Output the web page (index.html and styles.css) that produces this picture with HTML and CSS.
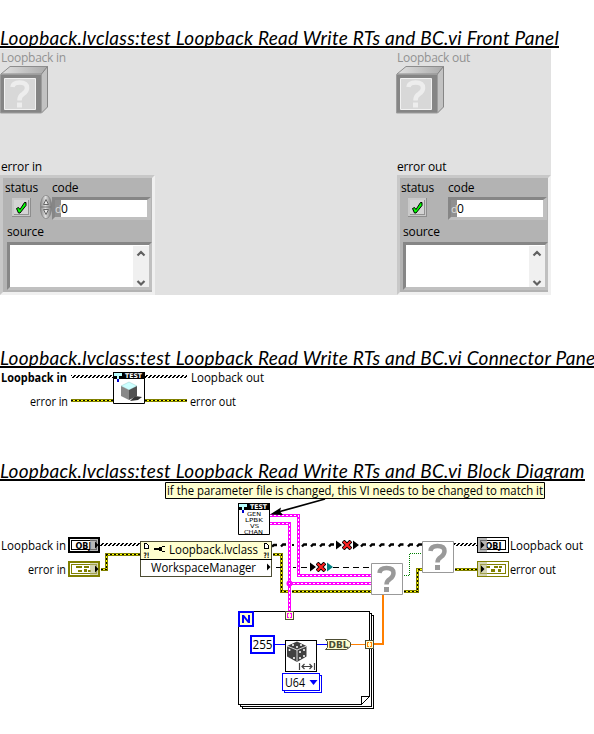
FILE: index.html
```html
<!DOCTYPE html>
<html lang="en">
<head>
<meta charset="utf-8">
<title>test Loopback Read Write RTs and BC.vi</title>
<link rel="stylesheet" href="styles.css">
</head>
<body>
<svg class="defs" width="0" height="0" aria-hidden="true">
  <defs>
    <linearGradient id="top" x1="0" x2="1"><stop offset="0" stop-color="#e0e0e0"/><stop offset="1" stop-color="#aaa"/></linearGradient>
    <linearGradient id="knob" x1="0" x2="1"><stop offset="0" stop-color="#888"/><stop offset=".45" stop-color="#ddd"/><stop offset="1" stop-color="#777"/></linearGradient>
    <pattern id="hatch" width="4" height="3" patternUnits="userSpaceOnUse"><path d="M2 0h2v1h-2zM1 1h2v1h-2zM0 2h2v1h-2z"/></pattern>
    <symbol id="cube" viewBox="0 0 48 48">
      <path d="M1 8L10 .5H47.500L41.500 8z" fill="url(#top)" stroke="#8d8d8d"/>
      <path d="M41.500 8L47.500 .5V41L41.500 47z" fill="#c2c2c2" stroke="#858585"/>
      <path d="M.5 8.500h41v38.500H.5z" fill="#858585" stroke="#9d9d9d"/>
      <path d="M4.500 12.500h31v31h-31z" fill="#d8d8d8" stroke="#f2f2f2"/>
      <path d="M12.500 21Q13 16.500 19.500 16.500Q27 16.500 27 22Q27 25.500 23 28Q19.500 30 19.500 34.500" fill="none" stroke="#ededed" stroke-width="4.500"/>
      <path d="M17 36.500h5v5h-5z" fill="#ededed"/>
    </symbol>
    <symbol id="check" viewBox="0 0 19 19">
      <path d="M0 0h19v19H0z" fill="#8d8d8d"/><path d="M0 0h18v18H0z" fill="#c9c9c9"/><path d="M2 2h15v15H2z" fill="#929292"/><path d="M2 2h14v14H2z" fill="#d4d4d4"/>
      <path d="M4.500 10.500l2-1 1.500 2L12.500 4.500h1.500v3L8 15H6.500z" fill="#0f0" stroke="#000"/>
    </symbol>
    <symbol id="knobs" viewBox="0 0 12 24">
      <ellipse cx="6" cy="12" rx="5.700" ry="11.700" fill="url(#knob)" stroke="#777" stroke-width=".6"/>
      <path d="M1 12h10" stroke="#777"/><path d="M3.500 9.500L6 4.500l2.500 5zM3.500 14.500h5L6 19.500z" fill="#e8e8e8" stroke="#666"/>
    </symbol>
    <symbol id="bar" viewBox="0 0 16 41">
      <path d="M0 0h16v41H0z" fill="#f0f0f0"/><path d="M4.500 9.500L8 6l3.500 3.500M4.500 35L8 38.500l3.500-3.500" fill="none" stroke="#606060" stroke-width="2.200"/>
    </symbol>
    <symbol id="unknown" viewBox="0 0 32 32">
      <path d="M.5 .5h31v31H.5z" fill="#fff" stroke="#999"/>
      <path d="M8.500 10Q9 5 15.500 5Q22.500 5 22.500 10Q22.500 13.500 19 16Q15.500 18 15.500 21.500" fill="none" stroke="#999" stroke-width="4.500"/>
      <path d="M13 24h5v5h-5z" fill="#999"/>
    </symbol>
    <symbol id="test" viewBox="0 0 32 32">
      <path d="M.5 .5h31v31H.5z" fill="#fff" stroke="#000"/><path d="M0 0h32v7H0z"/>
      <path d="M1 1h8v3H6v3H4V4H1z" fill="#b8ffff"/><path d="M4 7h2v3H4z" fill="#00c"/>
      <text class="pixel" x="12" y="6" fill="#fff" font-size="6.500" textLength="17" lengthAdjust="spacingAndGlyphs">TEST</text>
    </symbol>
    <symbol id="cross" viewBox="0 0 10 10"><path d="M1 1l8 8M9 1L1 9" stroke="#000" stroke-width="4"/><path d="M1.500 1.500l7 7M8.500 1.500l-7 7" stroke="#f22" stroke-width="2.200"/></symbol>
  </defs>
</svg>

<main class="doc">
  <section class="front">
    <h2 class="title">Loopback.lvclass:test Loopback Read Write RTs and BC.vi Front Panel</h2>
    <div class="panel">
      <div class="column">
        <div class="faded">Loopback in</div>
        <svg class="cube" width="48" height="48"><use href="#cube"/></svg>
        <div class="name">error in</div>
        <div class="cluster">
          <div class="fields">
            <div class="status"><span>status</span><svg width="19" height="19"><use href="#check"/></svg></div>
            <svg class="knobs" width="12" height="24"><use href="#knobs"/></svg>
            <div class="code"><span>code</span><div class="number"><i>d</i><b>0</b></div></div>
          </div>
          <div class="source">source</div>
          <div class="textbox"><svg width="16" height="41"><use href="#bar"/></svg></div>
        </div>
      </div>
      <div class="column">
        <div class="faded">Loopback out</div>
        <svg class="cube" width="48" height="48"><use href="#cube"/></svg>
        <div class="name">error out</div>
        <div class="cluster">
          <div class="fields">
            <div class="status"><span>status</span><svg width="19" height="19"><use href="#check"/></svg></div>
            <div class="knobs"></div>
            <div class="code"><span>code</span><div class="number"><i>d</i><b>0</b></div></div>
          </div>
          <div class="source">source</div>
          <div class="textbox"><svg width="16" height="41"><use href="#bar"/></svg></div>
        </div>
      </div>
    </div>
  </section>

  <section class="connector">
    <h2 class="title">Loopback.lvclass:test Loopback Read Write RTs and BC.vi Connector Pane</h2>
    <svg class="canvas" width="594" height="60" viewBox="0 368 594 60">
      <g class="label">
        <text x="1" y="381.500" font-weight="700" textLength="66" lengthAdjust="spacingAndGlyphs">Loopback in</text>
        <text x="30" y="405.500" textLength="38" lengthAdjust="spacingAndGlyphs">error in</text>
        <text x="191" y="381.500" textLength="73" lengthAdjust="spacingAndGlyphs">Loopback out</text>
        <text x="190" y="405.500" textLength="46" lengthAdjust="spacingAndGlyphs">error out</text>
      </g>
      <g class="crisp">
        <path d="M71 375h42v3H71zM145 375h42v3h-42z" fill="url(#hatch)"/>
        <path class="err" d="M71 400.500h42M145 400.500h42"/><path class="err-core" d="M71 400.500h42M145 400.500h42"/><path class="err-dash" d="M71 400.500h42M145 400.500h42"/>
      </g>
      <use href="#test" x="113" y="372" width="32" height="32"/>
      <path d="M130 401l5-5 7 1-4 3z" fill="#333"/>
      <path d="M121 386l8-4 8 4-8 4z" fill="#cff" stroke="#9cc" stroke-width=".5"/><path d="M121 386l8 4v10l-8-4z" fill="#888"/><path d="M137 386l-8 4v10l8-4z" fill="#505050"/>
    </svg>
  </section>

  <section class="diagram">
    <h2 class="title">Loopback.lvclass:test Loopback Read Write RTs and BC.vi Block Diagram</h2>
    <svg class="canvas" width="594" height="253" viewBox="0 481 594 253">
      <!-- comment -->
      <path d="M165.500 482.500h379v16h-379z" fill="#ffffcf" stroke="#000"/>
      <text class="label" x="167" y="495" textLength="376" lengthAdjust="spacingAndGlyphs">if the parameter file is changed, this VI needs to be changed to match it</text>

      <!-- wires -->
      <g class="crisp">
        <path d="M100 543h40v3h-40zM454 543h23v3h-23z" fill="url(#hatch)"/>
        <g transform="translate(.5 .5)">
          <path class="err" d="M100 569h6v-15h34M272 554h9v37h6M291 591h80M403 591h14v-22h5M454 569h23"/>
          <path class="err-core" d="M100 569h6v-15h34M272 554h9v37h6M291 591h80M403 591h14v-22h5M454 569h23"/>
          <path class="err-dash" d="M100 569h6v-15h34M272 554h9v37h6M291 591h80M403 591h14v-22h5M454 569h23"/>
        </g>
        <path class="pink" d="M270 515.500h28.500V575.500H371M270 523.500h19.500V611M289 583.500h82"/>
        <path class="pink-core" d="M270 515.500h28.500V575.500H371M270 523.500h19.500V611M289 583.500h82"/>
        <path d="M276 567.500h9M293 567.500h3M301 567.500h9M333 567.500h38" fill="none" stroke="#000" stroke-dasharray="6 4"/>
        <path d="M404 575.500h5.500v-22H422" fill="none" stroke="#007f00" stroke-dasharray="1 1"/>
        <path d="M373 644h10v-49" fill="none" stroke="#ff7f00" stroke-width="2"/>
        <path d="M351 644.500h14" stroke="#ff7f00"/>
        <path d="M275 644.500h10M317 644.500h10" stroke="#00f"/>
      </g>
      <path d="M272 546.500l2-1.500h3M281 546.500l2-2h3M302 546.500l2-2h3M311 546.500l2-2h3M320 546.500l2-2h3M329 546.500l2-2h3M361 546.500l2-2h3M370 546.500l2-2h3M379.500 546.500l2-2h3M389 546.500l2-2h3M398.500 546.500l2-2h3M408 546.500l2-2h3M417 546.500l2-2h3" fill="none" stroke="#000" stroke-width="2.400"/>
      <path d="M292 545h2" stroke="#000" stroke-width="2"/>
      <circle cx="289.500" cy="583.500" r="3" fill="#f0f"/><path d="M289 583h1v1h-1z" fill="#fff"/>
      <path d="M336 540.500v9l6-4.500zM353 540.500v9l6-4.500zM310 562.500v9l6-4.500z"/><path d="M327 562.500v9l6-4.500z" fill="#008080"/>
      <use href="#cross" x="342" y="540" width="10" height="10"/><use href="#cross" x="316" y="562" width="10" height="10"/>
      <path d="M325 499L280 511.500" stroke="#000" stroke-width="1.700"/><path d="M270 514.500l11-7-1 4 3 3.500z"/>

      <!-- terminals -->
      <g class="label">
        <text x="1" y="549.500" textLength="65" lengthAdjust="spacingAndGlyphs">Loopback in</text>
        <text x="28" y="573.500" textLength="38" lengthAdjust="spacingAndGlyphs">error in</text>
        <text x="510" y="549.500" textLength="73" lengthAdjust="spacingAndGlyphs">Loopback out</text>
        <text x="510" y="573.500" textLength="46" lengthAdjust="spacingAndGlyphs">error out</text>
      </g>
      <g class="crisp">
        <path d="M69 538h30v14H69z" fill="#fff" stroke="#000" stroke-width="2"/><path d="M71.500 540.500h25v9h-25z" fill="#fff" stroke="#000"/>
        <path d="M69 562h30v14H69z" fill="#fff" stroke="#808000" stroke-width="2"/><path d="M71.500 564.500h25v9h-25z" fill="#fff" stroke="#808000"/>
        <path d="M76 566h6v2h-6zM84 566h5v2h-5zM78 570h4v2h-4zM84 569h3v3h-3zM88 570h3v2h-3z" fill="#808000"/>
        <path d="M477.500 537.500h31v15h-31z" fill="#fff" stroke="#000"/><path d="M480.500 540.500h25v9h-25z" fill="#fff" stroke="#000"/>
        <path d="M477.500 561.500h31v15h-31z" fill="#fff" stroke="#808000"/><path d="M480.500 564.500h25v9h-25z" fill="#fff" stroke="#808000"/>
        <path d="M486 566h4v2h-4zM491 569h4v3h-4zM494 566h4v2h-4zM499 566h3v2h-3zM498 569h3v3h-3z" fill="#808000"/>
      </g>
      <text class="pixel" x="75.500" y="548.500" font-size="9" textLength="16" lengthAdjust="spacingAndGlyphs">OBJ</text>
      <text class="pixel" x="485.500" y="548.500" font-size="9" textLength="16" lengthAdjust="spacingAndGlyphs">OBJ</text>
      <path d="M90 539h8v12h-8zM478 538h9v14h-9z" fill="#999" opacity=".7"/>
      <path d="M90 563h8v12h-8zM478 562h9v14h-9z" fill="#b8b880" opacity=".6"/>
      <path d="M95 541.500v7l3.500-3.500zM95 565.500v7l3.500-3.500zM481 541.500v7l3.500-3.500zM481 565.500v7l3.500-3.500z"/>

      <!-- property node -->
      <g class="crisp">
        <path d="M140.500 541.500h131v35h-131z" fill="#fff" stroke="#4c4c33"/><path d="M141 542h130v17H141z" fill="#ffffcf"/><path d="M140 559.500h132" stroke="#000"/>
        <path d="M144.500 543.500h2l2 2v3h-4zM264.500 543.500h2l2 2v3h-4z" fill="#fff" stroke="#000"/>
        <path d="M154 548h6v2h-6zM159 547h3v4h-3zM162 546h3v1h-3zM162 551h3v1h-3z"/>
      </g>
      <text class="pixel" x="143.500" y="557.500" font-size="7.500" textLength="6" lengthAdjust="spacingAndGlyphs">?!</text>
      <text class="pixel" x="263.500" y="557.500" font-size="7.500" textLength="6" lengthAdjust="spacingAndGlyphs">?!</text>
      <path d="M267 563.500v7l3.500-3.500z"/>
      <g class="label">
        <text x="169" y="554" textLength="89" lengthAdjust="spacingAndGlyphs">Loopback.lvclass</text>
        <text x="151" y="572" textLength="105" lengthAdjust="spacingAndGlyphs">WorkspaceManager</text>
      </g>

      <!-- generator VI -->
      <use href="#test" x="238" y="503" width="32" height="32"/>
      <g class="tiny">
        <text x="247" y="516" textLength="14" lengthAdjust="spacingAndGlyphs">GEN</text>
        <text x="245" y="522" textLength="18" lengthAdjust="spacingAndGlyphs">LPBK</text>
        <text x="250" y="528" textLength="9" lengthAdjust="spacingAndGlyphs">VS</text>
        <text x="244" y="533.500" textLength="19" lengthAdjust="spacingAndGlyphs">CHAN</text>
      </g>
      <use href="#unknown" x="371" y="563" width="32" height="32"/><use href="#unknown" x="422" y="541" width="32" height="32"/>

      <!-- for loop -->
      <g class="crisp">
        <path d="M369.500 613.500h2v93h-131v-2M371.500 615.500h2v93h-131v-2" fill="none" stroke="#000"/>
        <path d="M369.500 697v-85.500h-131v93h123" fill="none" stroke="#000"/>
        <path d="M361.500 704v-7.500h8" fill="none" stroke="#000"/>
        <path d="M239 612h14v14h-14z" fill="#ffffcf" stroke="#00f" stroke-width="2"/>
        <path d="M285.500 611.500h8v8h-8z" fill="#ffffcf" stroke="#4c4c33"/><path d="M289 613.500h-1.500v4h1.500M290 613.500h1.500v4h-1.500" fill="none" stroke="#f0f"/>
        <path d="M365.500 640.500h8v8h-8z" fill="#ffffcf" stroke="#4c4c33"/><path d="M369 642.500h-1.500v4h1.500M370 642.500h1.500v4h-1.500" fill="none" stroke="#ff7f00"/>
        <path d="M251 636h23v17h-23z" fill="#fff" stroke="#00f" stroke-width="2"/>
        <path d="M285.500 640.500h31v31h-31z" fill="#fff" stroke="#000"/>
        <path d="M284.500 675.500h37v17h-37z" fill="#fff" stroke="#00f"/><path d="M282.500 673.500h37v17h-37z" fill="#fff" stroke="#00f"/>
      </g>
      <path d="M361.500 704.500l8-8" stroke="#000"/>
      <path d="M242 623v-8h2l4 5v-5h2v8h-2l-4-5v5z" fill="#00f"/>
      <path d="M309.500 680h8l-4 5z" fill="#00f"/>
      <path d="M325.500 639.500h21l4 3v4l-4 3h-21l2-2v-6z" fill="#ffffcf" stroke="#4c4c33"/>
      <text class="pixel" x="328.500" y="648" font-size="9" fill="#4c4c33" textLength="20" lengthAdjust="spacingAndGlyphs">DBL</text>
      <text class="label" x="252.500" y="649" textLength="20" lengthAdjust="spacingAndGlyphs">255</text>
      <text class="label" x="285" y="687" textLength="20" lengthAdjust="spacingAndGlyphs">U64</text>
      <path d="M287 646l10-4.500 9.500 4.500v10.500L297 662l-10-5.500z" fill="#404040"/>
      <path d="M287 646l10 4 9.500-4M297 650v11.500" fill="none" stroke="#fff" stroke-width=".8"/>
      <g fill="#fff"><circle cx="293" cy="645" r="1"/><circle cx="297" cy="647" r="1"/><circle cx="301" cy="645" r="1"/><circle cx="289.500" cy="650" r="1"/><circle cx="294" cy="658" r="1"/><circle cx="300" cy="652" r="1"/><circle cx="304" cy="650" r="1"/><circle cx="300" cy="658" r="1"/><circle cx="304" cy="656" r="1"/></g>
      <path d="M299.500 663v7M314.500 663v7M302 666.500h10M304.500 664l-2.500 2.500 2.500 2.500M309.500 664l2.500 2.500-2.500 2.500" fill="none" stroke="#404040" stroke-width="1.200"/>
    </svg>
  </section>
</main>
</body>
</html>
```

FILE: styles.css
```css
* { box-sizing: border-box; }
body { margin: 0; background: #fff; color: #000; font-family: "Open Sans", "Noto Sans", sans-serif; font-size: 12px; }
svg { display: block; }
.defs { position: absolute; }
.doc { width: 594px; height: 734px; overflow: hidden; }

.title { width: max-content; height: 20px; margin: 0; border-bottom: 2px solid #000; font: italic 400 19px/19px Lato, sans-serif; letter-spacing: .26px; white-space: nowrap; }

.front { height: 320px; padding-top: 28px; }
.connector { height: 113px; padding-top: 28px; }
.diagram { padding-top: 28px; }

.panel { display: flex; gap: 241px; width: 551px; height: 246px; margin-top: 1px; background: #e1e1e1; }
.column { width: 155px; }
.faded, .name, .status span, .code span, .source { line-height: 16px; white-space: nowrap; letter-spacing: -.15px; }
.faded { height: 17px; padding: 1px 0 0 1px; color: #929292; letter-spacing: -.25px; }
.name { margin-top: 44px; height: 17px; padding: 1px 0 0 1px; }

.cluster { width: 155px; height: 120px; padding: 0 0 0 2px; border: 3px solid; border-color: #c8c8c8 #f0f0f0 #f0f0f0 #c8c8c8; background: #b3b3b3; }
.column + .column .cluster { width: 154px; margin-left: 1px; padding-left: 1px; }
.fields { display: flex; height: 46px; }
.status { width: 35px; padding-top: 2px; }
.status svg { margin: 2px 0 0 7px; }
.status span { display: block; height: 16px; }
.knobs { width: 12px; margin-top: 17px; }
.code span { display: block; height: 19px; padding-top: 2px; }
.number { display: flex; width: 99px; height: 23px; border: 3px solid; border-color: #868686 #c0c0c0 #c0c0c0 #868686; border-right-width: 4px; background: #fff; line-height: 18px; }
.number i { width: 6px; background: #909090; color: #ddd; font-style: normal; font-size: 11px; }
.number b { font-weight: 400; }
.source { height: 18px; padding: 0 0 0 2px; }
.textbox { display: flex; justify-content: flex-end; width: 145px; height: 48px; margin-left: 2px; padding-top: 1px; border: 3px solid; border-color: #868686 #c0c0c0 #c0c0c0 #868686; background: #fff; }

.canvas { overflow: visible; }
.crisp { shape-rendering: crispEdges; }
.label { font: 12px "Open Sans", "Noto Sans", sans-serif; }
.pixel { font-family: "DejaVu Sans", sans-serif; font-weight: 700; }
.tiny { font: 5.5px/1 "DejaVu Sans", sans-serif; }
.err, .err-core, .err-dash, .pink, .pink-core { fill: none; }
.err { stroke: #808000; stroke-width: 3; }
.err-core { stroke: #ffff00; stroke-width: 1; }
.err-dash { stroke: #000; stroke-width: 1; stroke-dasharray: 2 2; }
.pink { stroke: #f0f; stroke-width: 3; }
.pink-core { stroke: #fff; stroke-width: 1; stroke-dasharray: 2 2; }
```
